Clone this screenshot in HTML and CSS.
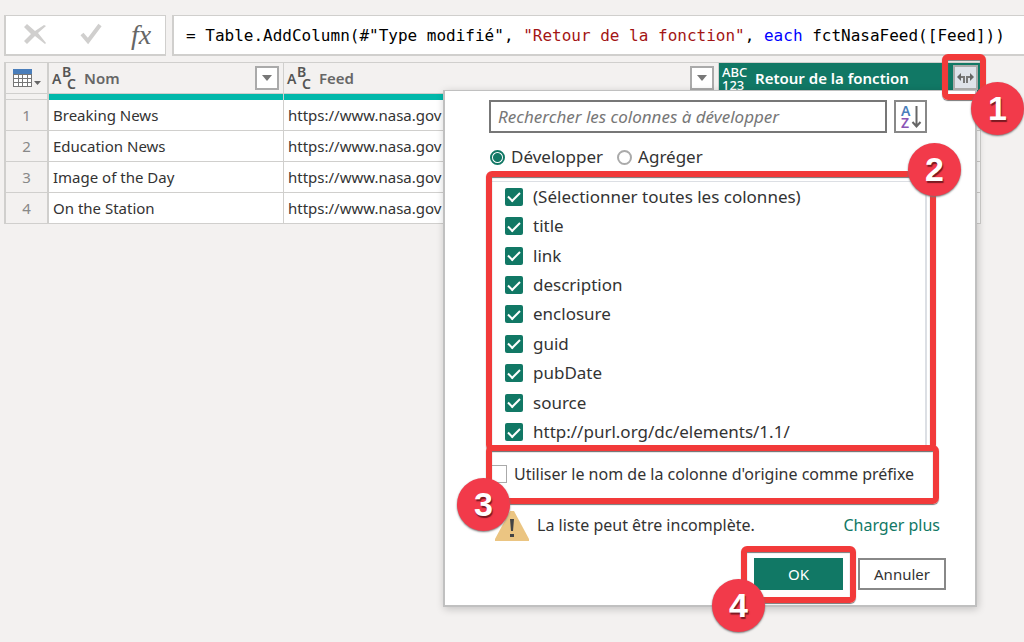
FILE: index.html
```html
<!DOCTYPE html>
<html lang="fr">
<head>
<meta charset="utf-8">
<title>Retour de la fonction</title>
<link rel="stylesheet" href="styles.css">
</head>
<body>
<header class="formula">
  <div class="formula-tools">
    <button class="tool" aria-label="Annuler la formule"><svg width="24" height="24" viewBox="0 0 24 24"><path d="M1 4l3-3 8 7 9-6 2 1-8 7 8 10-1 1-10-8-8 8-3-3 7-7z" fill="#d0cfce"/></svg></button>
    <button class="tool" aria-label="Valider la formule"><svg width="24" height="24" viewBox="0 0 24 24"><path d="M3 11l6 7L21 2" fill="none" stroke="#d0cfce" stroke-width="4"/></svg></button>
    <button class="tool fx" aria-label="Insérer une étape">fx</button>
  </div>
  <code class="formula-text">= Table.AddColumn(#"Type modifié", <span class="string">"Retour de la fonction"</span>, <span class="keyword">each</span> fctNasaFeed([Feed]))</code>
</header>
<main class="grid-area">
  <table class="data">
    <colgroup><col class="col-index"><col class="col-name"><col><col class="col-result"></colgroup>
    <thead>
      <tr>
        <th><button class="table-menu" aria-label="Menu de la table"><svg width="28" height="20" viewBox="0 0 28 20"><path d="M0 1h19v18H0z" fill="#777"/><path d="M0 1h19v5H0z" fill="#4a7ebb"/><path d="M1 7h4v3H1zM6 7h3v3H6zM10 7h4v3h-4zM15 7h3v3h-3zM1 11h4v3H1zM6 11h3v3H6zM10 11h4v3h-4zM15 11h3v3h-3zM1 15h4v3H1zM6 15h3v3H6zM10 15h4v3h-4zM15 15h3v3h-3z" fill="#fff"/><path d="M21 13h7l-3.500 4z" fill="#666"/></svg></button></th>
        <th><div class="head"><svg class="type" width="24" height="26" viewBox="0 0 24 26"><text x="-1" y="19">A</text><text class="small" x="9" y="12">B</text><text class="small" x="14" y="24">C</text></svg><span class="head-title">Nom</span><button class="filter" aria-label="Filtrer Nom"><svg width="10" height="6" viewBox="0 0 10 6"><path d="M0 0h10L5 6z" fill="#777"/></svg></button></div></th>
        <th><div class="head"><svg class="type" width="24" height="26" viewBox="0 0 24 26"><text x="-1" y="19">A</text><text class="small" x="9" y="12">B</text><text class="small" x="14" y="24">C</text></svg><span class="head-title">Feed</span><button class="filter" aria-label="Filtrer Feed"><svg width="10" height="6" viewBox="0 0 10 6"><path d="M0 0h10L5 6z" fill="#777"/></svg></button></div></th>
        <th class="selected">
          <div class="head"><svg class="type-any" width="26" height="26" viewBox="0 0 26 26"><text x="0" y="12">ABC</text><text x="0" y="25">123</text></svg><span class="head-title">Retour de la fonction</span></div>
          <section class="popup">
            <div class="search-row">
              <input class="search" type="text" placeholder="Rechercher les colonnes à développer" aria-label="Rechercher les colonnes à développer">
              <button class="sort" aria-label="Trier"><svg width="24" height="26" viewBox="0 0 24 26"><text class="sort-a" x="2" y="12">A</text><text class="sort-z" x="2" y="24">Z</text><path d="M17.500 2v20M13.500 18l4 4.500 4-4.500" fill="none" stroke="#666" stroke-width="2"/></svg></button>
            </div>
            <div class="modes">
              <label class="mode"><input type="radio" name="mode" checked>Développer</label>
              <label class="mode"><input type="radio" name="mode">Agréger</label>
            </div>
            <div class="list-wrap">
              <div class="list">
                <label class="item"><input type="checkbox" checked>(Sélectionner toutes les colonnes)</label>
                <label class="item"><input type="checkbox" checked>title</label>
                <label class="item"><input type="checkbox" checked>link</label>
                <label class="item"><input type="checkbox" checked>description</label>
                <label class="item"><input type="checkbox" checked>enclosure</label>
                <label class="item"><input type="checkbox" checked>guid</label>
                <label class="item"><input type="checkbox" checked>pubDate</label>
                <label class="item"><input type="checkbox" checked>source</label>
                <label class="item"><input type="checkbox" checked>http://purl.org/dc/elements/1.1/</label>
              </div>
              <div class="frame frame-list"><span class="badge badge-2">2</span></div>
            </div>
            <div class="prefix-wrap">
              <label class="prefix"><input type="checkbox">Utiliser le nom de la colonne d'origine comme préfixe</label>
              <div class="frame frame-prefix"><span class="badge badge-3">3</span></div>
            </div>
            <div class="notice">
              <svg width="34" height="31" viewBox="0 0 34 31"><path d="M15 1h4l15 28v2H0v-2z" fill="#ebc582"/><path d="M15 9h4l-1 12h-2zM15 24h4v3h-4z" fill="#444"/></svg>
              <span>La liste peut être incomplète.</span>
              <a class="more" href="#">Charger plus</a>
            </div>
            <div class="actions">
              <div class="ok-wrap"><button class="action ok">OK</button><div class="frame frame-ok"><span class="badge badge-4">4</span></div></div>
              <button class="action">Annuler</button>
            </div>
          </section>
          <div class="expand-wrap">
            <button class="expand" aria-label="Développer la colonne"><svg width="17" height="12" viewBox="0 0 17 12"><path d="M7 11V5H3M10 11V5h4" fill="none" stroke="#777" stroke-width="2"/><path d="M0 5l4-4v8zM17 5l-4-4v8z" fill="#666"/></svg></button>
            <div class="frame frame-expand"><span class="badge badge-1">1</span></div>
          </div>
        </th>
      </tr>
      <tr class="quality"><td></td><td></td><td></td><td></td></tr>
    </thead>
    <tbody>
      <tr><th scope="row">1</th><td>Breaking News</td><td>https://www.nasa.gov</td><td></td></tr>
      <tr><th scope="row">2</th><td>Education News</td><td>https://www.nasa.gov</td><td></td></tr>
      <tr><th scope="row">3</th><td>Image of the Day</td><td>https://www.nasa.gov</td><td></td></tr>
      <tr><th scope="row">4</th><td>On the Station</td><td>https://www.nasa.gov</td><td></td></tr>
    </tbody>
  </table>
</main>
</body>
</html>
```
FILE: styles.css
```css
* { box-sizing: border-box; }
body {
  margin: 0;
  padding-top: 15px;
  min-height: 100vh;
  background: #f3f1f0;
  color: #333;
  font: 15px/20px "Noto Sans", "Open Sans", sans-serif;
  overflow: hidden;
}
button, input { font: inherit; color: inherit; margin: 0; }
button { padding: 0; display: flex; align-items: center; justify-content: center; }

.formula { display: flex; gap: 6px; padding-left: 4px; }
.formula-tools, .formula-text { height: 41px; border: 1px solid #d0cfcd; border-bottom-width: 2px; border-left-width: 2px; background: #fff; }
.formula-tools { display: flex; align-items: center; width: 162px; padding-left: 17px; gap: 32px; }
.tool { border: 0; background: none; width: 24px; height: 36px; }
.formula-tools .fx { margin-left: -6px; font: italic 28px/32px "Liberation Serif", serif; color: #666; }
.formula-text { flex: 1; padding: 10px 0 0 12px; border-right: 0; color: #000; font: 16px/20px "DejaVu Sans Mono", monospace; white-space: pre; overflow: hidden; }
.string { color: #a31515; }
.keyword { color: #00f; }

.grid-area { padding: 6px 43px 0 4px; }
.data { width: 100%; table-layout: fixed; border-collapse: separate; border-spacing: 0; border-top: 1px solid #d0cfcd; border-left: 2px solid #d0cfcd; }
.col-index { width: 43px; }
.col-name { width: 235px; }
.col-result { width: 262px; }
.data th, .data td { padding: 0 4px; text-align: left; border-right: 1px solid #d0cfcd; border-bottom: 1px solid #d0cfcd; white-space: nowrap; }
.data tr > :first-child { border-right-width: 2px; }
.data thead th { height: 31px; background: #f3f1f0; }
.data tbody td { height: 31px; background: #fff; overflow: hidden; }
.data tbody th { color: #888; font-weight: 400; text-align: center; }
.data .quality td { height: 6px; background: #01b8aa; border-bottom: 0; }
.data .quality td:first-child { background: #f3f1f0; border-bottom: 1px solid #d0cfcd; }
.table-menu { border: 0; background: none; margin-left: 3px; }
.head { display: flex; align-items: center; gap: 7px; height: 30px; color: #666; }
.head-title { flex: 1; font-weight: 600; }
.type { font: 600 14px/14px "Noto Sans", sans-serif; fill: #555; overflow: visible; }
.type-any { font: 500 13px/13px "Noto Sans", sans-serif; fill: #fff; overflow: visible; }
.filter { width: 24px; height: 24px; border: 2px solid #aaa; background: #fff; }
.data thead .selected { position: relative; padding-left: 3px; background: #117865; }
.selected .head { color: #fff; }

.expand-wrap { position: absolute; top: 2px; right: 2px; }
.expand { width: 25px; height: 25px; border: 2px solid #aaa; background: #dfe3ea; }

.popup { position: absolute; top: 27px; right: 3px; width: 534px; height: 517px; padding: 9px 35px 0 44px; display: flex; flex-direction: column; background: #fff; border: 1px solid #c0c0c0; border-left-width: 2px; border-right-width: 2px; border-bottom-width: 2px; box-shadow: 1px 2px 8px rgba(0, 0, 0, .2); font-size: 16px; font-weight: 400; color: #333; }
.search-row { display: flex; gap: 7px; padding-right: 13px; }
.search { flex: 1; min-width: 0; height: 33px; padding: 0 7px; border: 2px solid #777; background: #fff; font-size: 17px; }
.search::placeholder { color: #777; font-style: italic; opacity: 1; }
.sort { width: 33px; height: 33px; border: 2px solid #888; background: #fff; }
.sort svg { overflow: visible; }
.sort-a, .sort-z { font: 600 14px/14px "Noto Sans", sans-serif; fill: #4a7ebb; }
.sort-z { fill: #8a55b5; }
.modes { display: flex; gap: 14px; height: 48px; align-items: center; padding-left: 1px; font-size: 17px; }
.mode, .item, .prefix { display: flex; align-items: center; }
.mode { gap: 6px; }
.mode input { appearance: none; width: 15px; height: 15px; border: 2px solid #aaa; border-radius: 50%; background: #fff; }
.mode input:checked { border-color: #117865; background: radial-gradient(#117865 0 4px, #fff 5px); }
.list-wrap, .prefix-wrap { position: relative; }
.list { display: grid; grid-template-rows: repeat(9, 1fr); height: 266px; margin-right: 13px; padding-left: 16px; border-top: 1px solid #dcdfe4; border-right: 2px solid #dcdfe4; font-size: 17px; }
.item { gap: 10px; }
.item input, .prefix input { appearance: none; flex: none; width: 18px; height: 18px; border: 1px solid #aaa; background: #fff; }
.item input:checked { border: 0; border-radius: 2px; background: #117865; display: grid; place-items: center; }
.item input:checked::before { content: ""; width: 10px; height: 5px; border: solid #fff; border-width: 0 0 2px 2px; transform: translateY(-1px) rotate(-45deg); }
.prefix { height: 54px; gap: 7px; white-space: nowrap; }
.notice { display: flex; align-items: center; gap: 8px; height: 48px; padding-left: 6px; }
.more { margin-left: auto; color: #117865; text-decoration: none; }
.actions { display: flex; justify-content: flex-end; gap: 15px; padding-top: 9px; margin-right: -6px; font-size: 15px; }
.ok-wrap { position: relative; }
.action { width: 88px; height: 32px; border: 2px solid #888; background: #fff; }
.ok { width: 89px; border: 0; background: #117865; color: #fff; }

.frame { position: absolute; border: 6px solid #f23a3a; border-radius: 6px; box-shadow: 0 1px 1px #777, inset 0 1px 1px #777; pointer-events: none; }
.frame-list { top: -10px; left: -3px; right: 4px; bottom: -4px; }
.frame-prefix { top: -2px; left: -3px; right: 1px; bottom: -3px; }
.frame-ok { top: -12px; left: -13px; right: -13px; bottom: -13px; }
.frame-expand { top: -11px; left: -11px; right: -8px; bottom: -10px; }
.badge { position: absolute; z-index: 2; width: 53px; height: 53px; border-radius: 50%; background: #f23a4a; box-shadow: 0 1px 2px #777; color: #fff; font: 700 34px/53px "Liberation Sans", sans-serif; text-align: center; text-shadow: 1px 2px 1px #7a1a22; }
.badge-1 { left: 23px; top: 22px; }
.badge-2 { right: -31px; top: -34px; }
.badge-3 { left: -35px; bottom: -33px; }
.badge-4 { left: -35px; bottom: -35px; }
```
